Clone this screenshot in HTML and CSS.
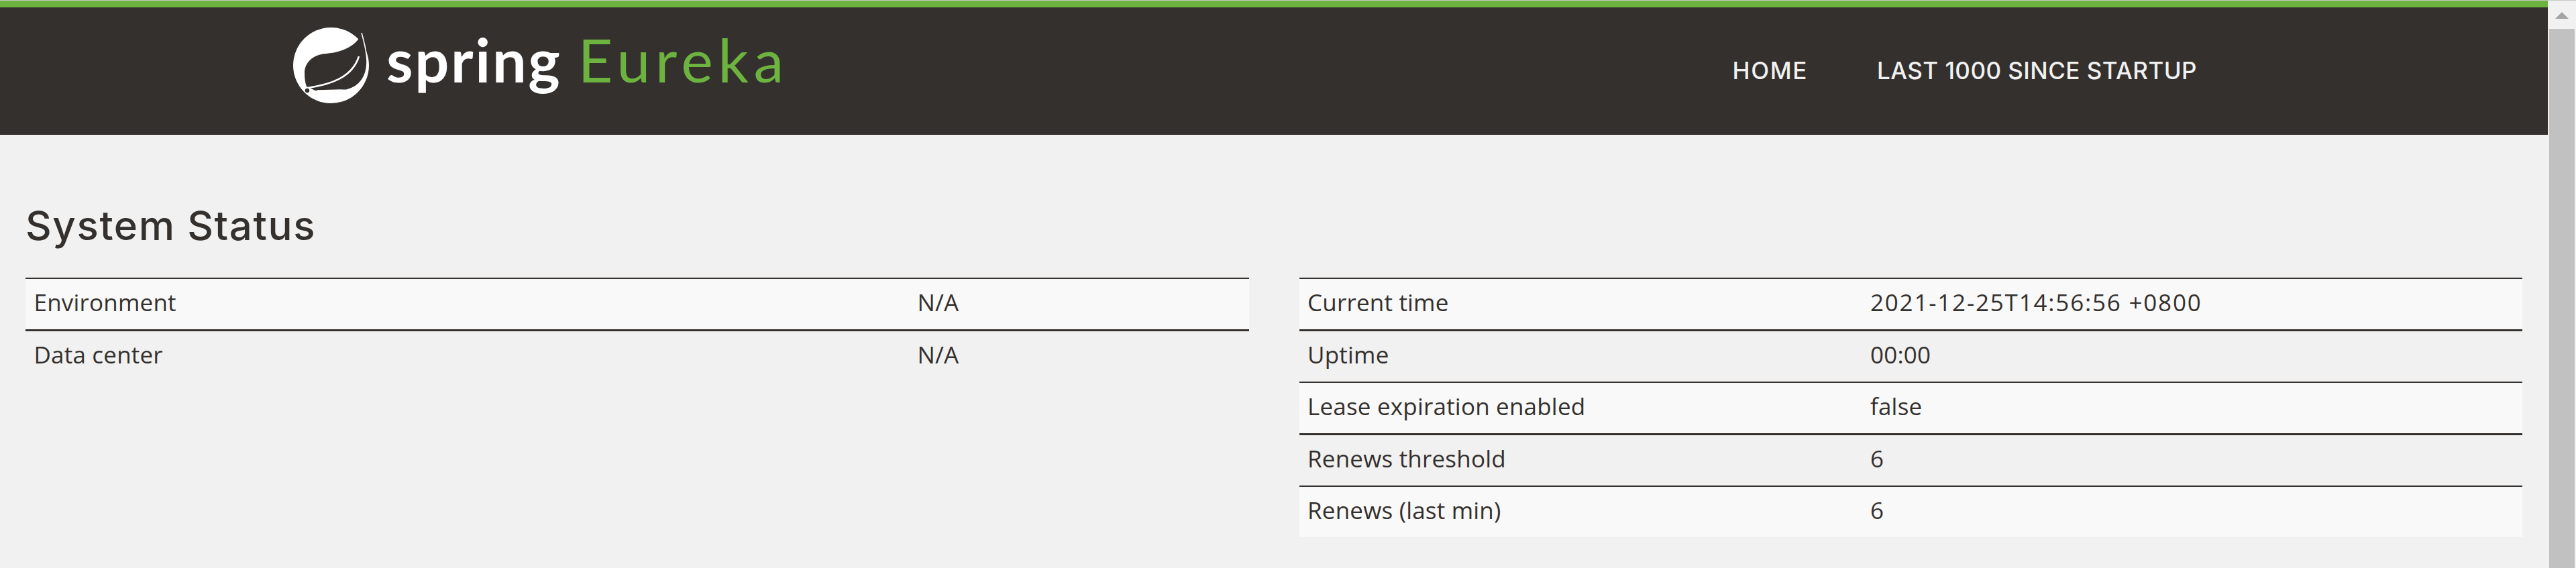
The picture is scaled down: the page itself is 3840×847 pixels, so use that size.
FILE: index.html
```html
<!DOCTYPE html>
<html lang="en">
  <head>
    <meta charset="UTF-8" />
    <title>Eureka</title>
    <link rel="stylesheet" href="styles.css">
  </head>
  <body>
    <div class="page">
      <header class="navbar">
        <a class="brand" href="#">
          <svg class="brand-leaf" viewBox="0 0 115 113" width="115" height="113">
            <circle cx="56.5" cy="56.5" r="56.5" fill="#fff" />
            <path fill="#34302d" d="M99 15C88 32 65 38 49 39C30 40 17 52 17 68C17 76 18 83 20 88L33 94L80 93C100 88 110 72 110 52C110 38 106 22 102 8Z" />
            <path fill="none" stroke="#fff" stroke-width="1.6" d="M102 8C106 22 110 38 110 52C110 72 100 88 80 93L36 94" />
            <path fill="none" stroke="#fff" stroke-width="2.6" d="M22 90C55 85 88 75 98 43" />
            <circle cx="21" cy="94" r="3.2" fill="#34302d" />
          </svg>
          <span class="brand-spring">spring</span>
          <span class="brand-eureka">Eureka</span>
        </a>
        <nav class="nav-links">
          <a href="#">HOME</a>
          <a href="#">LAST 1000 SINCE STARTUP</a>
        </nav>
      </header>

      <main class="content">
        <h1>System Status</h1>
        <div class="columns">
          <table class="status-table env-table">
            <tr><td>Environment</td><td>N/A</td></tr>
            <tr><td>Data center</td><td>N/A</td></tr>
          </table>
          <table class="status-table time-table">
            <tr><td>Current time</td><td class="timestamp">2021-12-25T14:56:56 +0800</td></tr>
            <tr><td>Uptime</td><td>00:00</td></tr>
            <tr><td>Lease expiration enabled</td><td>false</td></tr>
            <tr><td>Renews threshold</td><td>6</td></tr>
            <tr><td>Renews (last min)</td><td>6</td></tr>
          </table>
        </div>
      </main>
    </div>

    <div class="scrollbar">
      <div class="scroll-arrow"></div>
      <div class="scroll-thumb"></div>
    </div>
  </body>
</html>
```

FILE: styles.css
```css
* {
  box-sizing: border-box;
  margin: 0;
  padding: 0;
}

html,
body {
  height: 847px;
  overflow: hidden;
}

body {
  display: flex;
  background-color: #f1f1f1;
  border-top: 1px solid #c8c8c8;
  font-family: "Open Sans", "Liberation Sans", sans-serif;
  font-size: 35px;
  color: #34302d;
}

.page {
  flex: 1;
  min-width: 0;
}

/* HEADER */
.navbar {
  height: 200px;
  display: flex;
  justify-content: space-between;
  background-color: #34302d;
  border-top: 10px solid #6db33f;
  padding: 0 523px 0 437px;
}

.brand {
  display: flex;
  align-items: flex-start;
  text-decoration: none;
  font-family: Lato, sans-serif;
  font-size: 90px;
  line-height: 1;
}

.brand-leaf {
  margin-top: 30px;
  margin-right: 24px;
}

.brand-spring,
.brand-eureka {
  margin-top: 32px;
}

.brand-spring {
  color: #fff;
  font-weight: 700;
  letter-spacing: 2.7px;
  margin-right: 24px;
}

.brand-eureka {
  color: #6db33f;
  letter-spacing: 7.5px;
}

.nav-links {
  display: flex;
  gap: 103px;
  padding-top: 69px;
}

.nav-links a {
  color: #f1f1f1;
  text-decoration: none;
  font-family: Inter, sans-serif;
  font-weight: 500;
  font-size: 35px;
  line-height: 50px;
  letter-spacing: 0.45px;
}

.nav-links a:first-child {
  letter-spacing: 1.6px;
}

/* CONTENT */
.content {
  padding: 0 38px;
}

h1 {
  font-family: Inter, sans-serif;
  font-weight: 500;
  font-size: 60px;
  line-height: 66px;
  letter-spacing: 1.6px;
  padding-top: 102px;
  margin-bottom: 45px;
}

.columns {
  display: flex;
  gap: 75px;
  align-items: flex-start;
}

.status-table {
  flex: 1;
  min-width: 0;
  table-layout: fixed;
  border-collapse: separate;
  border-spacing: 0;
}

.status-table td {
  height: 77px;
  padding: 10px 12.5px 15px;
  line-height: 50px;
  letter-spacing: 0.2px;
  border-top: 2px solid #34302d;
  white-space: nowrap;
}

.status-table tr:nth-child(even) td {
  height: 78px;
  border-top-width: 3px;
}

.status-table tr:nth-child(odd) td {
  background-color: #f9f9f9;
}

.env-table td:first-child {
  width: 1317px;
}

.time-table td:first-child {
  width: 839px;
}

.status-table .timestamp {
  letter-spacing: 1.8px;
}

/* SCROLLBAR */
.scrollbar {
  width: 42px;
  flex-shrink: 0;
  background-color: #f1f1f1;
  padding: 17px 2px 0;
}

.scroll-arrow {
  width: 0;
  height: 0;
  margin: 0 auto 15px;
  border-left: 10px solid transparent;
  border-right: 10px solid transparent;
  border-bottom: 10px solid #a3a3a3;
}

.scroll-thumb {
  height: 810px;
  background-color: #c1c1c1;
}
```
